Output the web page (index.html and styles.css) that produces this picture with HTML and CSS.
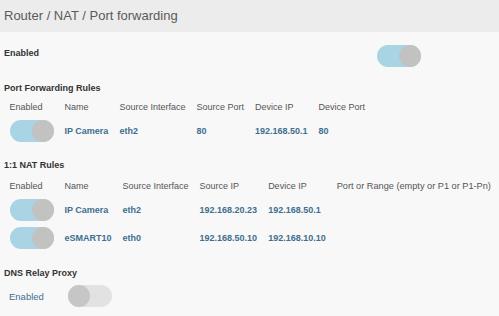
FILE: index.html
```html
<!DOCTYPE html>
<html lang="en">
<head>
    <meta charset="UTF-8">
    <meta name="viewport" content="width=device-width, initial-scale=1.0">
    <title>Port forwarding</title>
    <link rel="stylesheet" href="styles.css">
</head>
<body>
    <header class="page-header">
        <h1>Router / NAT / Port forwarding</h1>
    </header>

    <main class="content">
        <div class="setting-row">
            <span class="setting-label">Enabled</span>
            <span class="toggle on"></span>
        </div>

        <!-- Port forwarding -->
        <section class="rules pf-rules">
            <h2>Port Forwarding Rules</h2>
            <table>
                <thead>
                    <tr>
                        <th>Enabled</th>
                        <th>Name</th>
                        <th>Source Interface</th>
                        <th>Source Port</th>
                        <th>Device IP</th>
                        <th>Device Port</th>
                    </tr>
                </thead>
                <tbody>
                    <tr>
                        <td><span class="toggle on"></span></td>
                        <td>IP Camera</td>
                        <td>eth2</td>
                        <td>80</td>
                        <td>192.168.50.1</td>
                        <td>80</td>
                    </tr>
                </tbody>
            </table>
        </section>

        <!-- 1:1 NAT -->
        <section class="rules nat-rules">
            <h2>1:1 NAT Rules</h2>
            <table>
                <thead>
                    <tr>
                        <th>Enabled</th>
                        <th>Name</th>
                        <th>Source Interface</th>
                        <th>Source IP</th>
                        <th>Device IP</th>
                        <th>Port or Range (empty or P1 or P1-Pn)</th>
                    </tr>
                </thead>
                <tbody>
                    <tr>
                        <td><span class="toggle on"></span></td>
                        <td>IP Camera</td>
                        <td>eth2</td>
                        <td>192.168.20.23</td>
                        <td>192.168.50.1</td>
                        <td></td>
                    </tr>
                    <tr>
                        <td><span class="toggle on"></span></td>
                        <td>eSMART10</td>
                        <td>eth0</td>
                        <td>192.168.50.10</td>
                        <td>192.168.10.10</td>
                        <td></td>
                    </tr>
                </tbody>
            </table>
        </section>

        <!-- DNS relay -->
        <section class="rules dns-relay">
            <h2>DNS Relay Proxy</h2>
            <div class="dns-row">
                <span class="dns-label">Enabled</span>
                <span class="toggle"></span>
            </div>
        </section>
    </main>
</body>
</html>
```

FILE: styles.css
```css
* {
    margin: 0;
    padding: 0;
    box-sizing: border-box;
    font-family: "Liberation Sans", Arial, sans-serif;
}

body {
    background-color: #f8f8f8;
    color: #333;
}

.page-header {
    background-color: #ececec;
    height: 32px;
    padding: 0 4px;
}

.page-header h1 {
    font-size: 13px;
    font-weight: normal;
    line-height: 32px;
    color: #5a5a5a;
}

.content {
    padding: 0 4px;
}

.setting-row {
    display: flex;
    justify-content: space-between;
    align-items: flex-start;
    max-width: 417px;
    margin-top: 13px;
}

.setting-label {
    font-size: 9px;
    font-weight: bold;
    line-height: 17px;
}

.rules h2 {
    font-size: 9px;
    font-weight: bold;
    line-height: 14px;
    margin-top: 14px;
}

.nat-rules h2 {
    margin-top: 13px;
}

table {
    width: max-content;
    border-collapse: collapse;
    margin-top: 2px;
}

.nat-rules table {
    margin-top: 3px;
}

th, td {
    font-size: 9px;
    text-align: left;
    white-space: nowrap;
    padding: 0 5.5px;
}

th {
    font-weight: normal;
    color: #555;
    height: 20px;
}

.nat-rules th {
    height: 21px;
}

.nat-rules th:last-child {
    font-size: 9.2px;
}

td {
    font-weight: bold;
    color: #3e6f8f;
    height: 28px;
}

td .toggle {
    display: block;
}

.dns-row {
    display: flex;
    align-items: center;
    margin-top: 5px;
    padding-left: 5px;
}

.dns-label {
    width: 59px;
    font-size: 9.5px;
    color: #3e6f8f;
}

/* toggle switch */
.toggle {
    position: relative;
    display: inline-block;
    width: 44px;
    height: 22px;
    border-radius: 11px;
    background-color: #e2e2e2;
}

.toggle::after {
    content: "";
    position: absolute;
    top: 0;
    left: 0;
    width: 22px;
    height: 22px;
    border-radius: 50%;
    background-color: #c6c6c6;
}

.toggle.on {
    background-color: #a8d4e4;
}

.toggle.on::after {
    left: 22px;
    background-color: #c2c2c2;
}
```
